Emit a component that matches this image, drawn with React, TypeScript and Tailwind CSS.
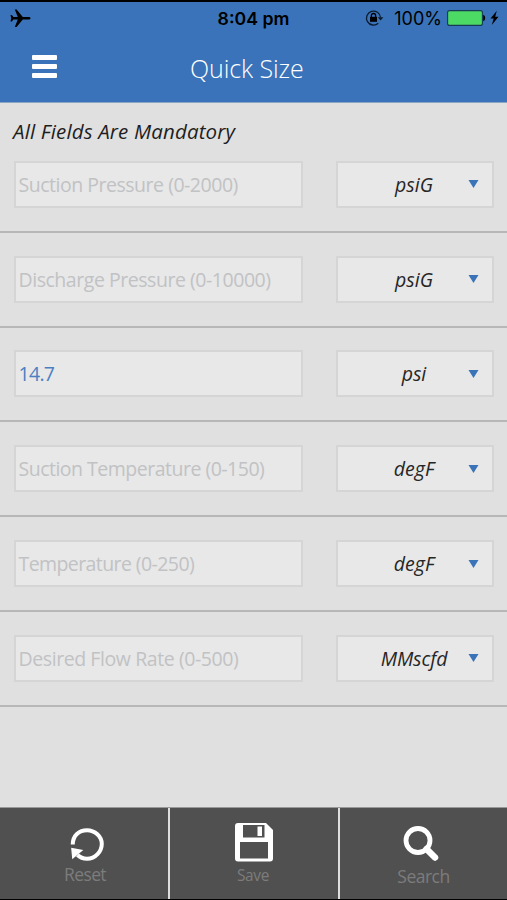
import React from 'react';

type Field = {
  placeholder: string;
  value?: string;
  unit: string;
  textClass: string;
  unitClass: string;
};

const fields: Field[] = [
  { placeholder: 'Suction Pressure (0-2000)', unit: 'psiG', textClass: 'tracking-[-0.48px]', unitClass: 'tracking-[0px]' },
  { placeholder: 'Discharge Pressure (0-10000)', unit: 'psiG', textClass: 'tracking-[-0.46px]', unitClass: 'tracking-[0px]' },
  { placeholder: 'Pressure', value: '14.7', unit: 'psi', textClass: 'tracking-[-0.7px]', unitClass: 'tracking-[0px]' },
  { placeholder: 'Suction Temperature (0-150)', unit: 'degF', textClass: 'tracking-[-0.5px]', unitClass: 'tracking-[0px]' },
  { placeholder: 'Temperature (0-250)', unit: 'degF', textClass: 'tracking-[-0.58px]', unitClass: 'tracking-[0px]' },
  { placeholder: 'Desired Flow Rate (0-500)', unit: 'MMscfd', textClass: 'tracking-[-0.42px]', unitClass: 'tracking-[-0.1px]' },
];

function StatusBar() {
  return (
    <div className="grid h-[32px] grid-cols-3 items-center pl-[10px] pr-[8px] font-['Inter','Liberation_Sans',sans-serif] text-black">
      <svg width="21" height="19" viewBox="0 0 21 19" fill="#000">
        <path d="M20.5 9.3c0 .8-.8 1.2-2 1.2h-5.7L6.6 18H4.8l3-7.5H3.4L1.9 12.6H.5l.7-3.3L.5 6h1.4l1.5 2.1h4.4L4.8.6h1.8l6.2 7.5h5.7c1.2 0 2 .4 2 1.2z" />
      </svg>
      <span className="pr-[2px] pt-px text-center text-[17.7px] font-semibold leading-none">8:04 pm</span>
      <div className="flex items-center justify-end">
        <svg width="19" height="18" viewBox="0 0 19 18" fill="none">
          <path d="M13.3 14.2a7 7 0 1 1 2.2-5.7" stroke="#0b1b30" strokeWidth="1.3" />
          <path d="M12.8 8.2h5.6l-2.8 3.2z" fill="#0b1b30" />
          <rect x="5" y="7.8" width="7" height="5" fill="#000" />
          <path d="M6.4 8V6.6a2.1 2.1 0 0 1 4.2 0V8" stroke="#000" strokeWidth="1.3" />
        </svg>
        <span className="ml-[10px] pt-px text-[18px] leading-none">100%</span>
        <svg className="ml-[5px]" width="39" height="16" viewBox="0 0 39 16">
          <rect x="0.6" y="0.6" width="34.8" height="14.8" rx="2" fill="#4cd964" stroke="#173a56" strokeWidth="1.1" />
          <path d="M36.2 4.8c2.6.8 2.6 5.6 0 6.4z" fill="#000" />
        </svg>
        <svg className="ml-[4px]" width="9" height="16" viewBox="0 0 9 16" fill="#000">
          <path d="M6.8.8.5 8.6h3.2L1.8 15 8.5 6.8H5.2z" />
        </svg>
      </div>
    </div>
  );
}

function FieldRow({ placeholder, value, unit, textClass, unitClass }: Field) {
  return (
    <div className="flex h-[94.8px] items-center border-b-2 border-[#b7b7b7] pl-[13.5px] pr-[13px]">
      <div className="flex h-[47px] w-[289px] items-center border-2 border-[#d5d5d5] bg-[#e8e8e8] pl-[3px]">
        <span className={`whitespace-nowrap text-[19.5px] ${textClass} ${value ? 'text-[#4a80c2]' : 'text-[#c1c2c4]'}`}>
          {value ?? placeholder}
        </span>
      </div>
      <div className="ml-auto flex h-[47px] w-[158px] items-center border-2 border-[#d5d5d5] bg-[#e8e8e8] pr-[13px]">
        <span className={`flex-1 pl-[22px] text-center text-[19.5px] italic text-[#262626] ${unitClass}`}>{unit}</span>
        <svg width="11" height="8" viewBox="0 0 11 8" fill="#3b73b9">
          <path d="M.5 0h10L5.5 8z" />
        </svg>
      </div>
    </div>
  );
}

export default function App() {
  return (
    <div className="flex h-[900px] w-[507px] flex-col overflow-hidden border-b border-t-2 border-black bg-[#e0e0e0] font-['Open_Sans',sans-serif]">
      {/* Header */}
      <header className="h-[101px] shrink-0 border-b border-[#8ea6c6] bg-[#3a73b9]">
        <StatusBar />
        <div className="flex h-[66px] items-center">
          <div className="ml-[32px] flex w-[25px] flex-col gap-[4px] pb-px">
            <div className="h-[5px] rounded-[1px] bg-white" />
            <div className="h-[5px] rounded-[1px] bg-white" />
            <div className="h-[5px] rounded-[1px] bg-white" />
          </div>
          <h1 className="ml-[133px] whitespace-nowrap pt-[4px] text-[25px] font-light tracking-[-0.1px] text-white">Quick Size</h1>
        </div>
      </header>

      {/* Form */}
      <main className="flex-1">
        <p className="h-[35px] whitespace-nowrap pl-[13px] pt-[12px] text-[20.5px] italic leading-[33px] tracking-[0.15px] text-[#1e1e1e]">
          All Fields Are Mandatory
        </p>
        {fields.map((field, i) => (
          <FieldRow key={i} {...field} />
        ))}
      </main>

      {/* Bottom toolbar */}
      <footer className="grid h-[92px] shrink-0 grid-cols-[170px_170px_167px] border-t border-[#989898] bg-[#505050] text-[#7c7c7c]">
        <div className="flex flex-col items-center border-r-2 border-[#dedede] pt-[18px]">
          <svg className="ml-[5px]" width="36" height="38" viewBox="0 0 34 36" fill="none">
            <path d="M3.5 17.5C3.5 9 9.5 4 17 4s14 6 14 13-6 14-14 14c-3.5 0-6.5-1-9-3.5" stroke="#fff" strokeWidth="3.8" />
            <path d="M2 20.5l11.5 2.300L3 31.500z" fill="#fff" />
          </svg>
          <span className="mt-[-4px] pl-[2px] text-[17.5px] leading-[28px] tracking-[-0.6px]">Reset</span>
        </div>
        <div className="flex flex-col items-center border-r-2 border-[#dedede] pr-[2px] pt-[15px]">
          <svg className="ml-[2px]" width="38" height="39" viewBox="0 0 38 39">
            <path d="M3 0h28l7 7v28.5a3 3 0 0 1-3 3H3a3 3 0 0 1-3-3V3a3 3 0 0 1 3-3z" fill="#fff" />
            <path d="M8 2h21.5v12.5H8zM5 19h28v16.5H5z" fill="#505050" />
            <path d="M22.5 3.5H27V13h-4.5z" fill="#fff" />
          </svg>
          <span className="text-[15.5px] leading-[26px] tracking-[-0.4px]">Save</span>
        </div>
        <div className="flex flex-col items-center pt-[18px]">
          <svg className="mr-[4px]" width="37" height="37" viewBox="0 0 37 37" fill="none">
            <circle cx="15" cy="14.5" r="12" stroke="#fff" strokeWidth="4.8" />
            <path d="M23.5 23l8.500 8.500" stroke="#fff" strokeWidth="6.5" strokeLinecap="round" />
          </svg>
          <span className="text-[17.5px] leading-[26px] tracking-[-0.5px]">Search</span>
        </div>
      </footer>
    </div>
  );
}
